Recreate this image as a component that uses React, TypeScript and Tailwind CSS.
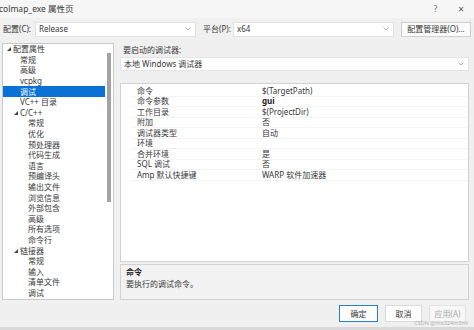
const font = { fontFamily: '"Noto Sans", "Noto Sans CJK SC", sans-serif' };

type Node = { label: string; level: 0 | 1 | 2; open?: boolean; selected?: boolean };

const tree: Node[] = [
  { label: "配置属性", level: 0, open: true },
  { label: "常规", level: 1 },
  { label: "高级", level: 1 },
  { label: "vcpkg", level: 1 },
  { label: "调试", level: 1, selected: true },
  { label: "VC++ 目录", level: 1 },
  { label: "C/C++", level: 1, open: true },
  { label: "常规", level: 2 },
  { label: "优化", level: 2 },
  { label: "预处理器", level: 2 },
  { label: "代码生成", level: 2 },
  { label: "语言", level: 2 },
  { label: "预编译头", level: 2 },
  { label: "输出文件", level: 2 },
  { label: "浏览信息", level: 2 },
  { label: "外部包含", level: 2 },
  { label: "高级", level: 2 },
  { label: "所有选项", level: 2 },
  { label: "命令行", level: 2 },
  { label: "链接器", level: 1, open: true },
  { label: "常规", level: 2 },
  { label: "输入", level: 2 },
  { label: "清单文件", level: 2 },
  { label: "调试", level: 2 },
];

const props: [string, string, boolean?][] = [
  ["命令", "$(TargetPath)"],
  ["命令参数", "gui", true],
  ["工作目录", "$(ProjectDir)"],
  ["附加", "否"],
  ["调试器类型", "自动"],
  ["环境", ""],
  ["合并环境", "是"],
  ["SQL 调试", "否"],
  ["Amp 默认快捷键", "WARP 软件加速器"],
];

function Chevron() {
  return (
    <svg width="6" height="4" viewBox="0 0 6 4" className="shrink-0">
      <polyline points="0.5,0.5 3,3 5.5,0.5" fill="none" stroke="#9a9a9a" strokeWidth="0.8" />
    </svg>
  );
}

function Triangle() {
  return (
    <span className="flex w-[6px] shrink-0 items-center">
      <svg width="4" height="4" viewBox="0 0 4 4">
        <polygon points="4,0 4,4 0,4" fill="#444" />
      </svg>
    </span>
  );
}

function TreeRow({ node }: { node: Node }) {
  const pad =
    node.level === 0 ? "pl-[4px]" : node.level === 2 ? "pl-[25px]" : node.open ? "pl-[11px]" : "pl-[17px]";
  return (
    <div
      className={`flex h-[10.6px] items-center whitespace-nowrap ${pad} ${
        node.selected ? "bg-[#0a72d6] text-white" : "text-[#383838]"
      }`}
    >
      {node.open && <Triangle />}
      <span>{node.label}</span>
    </div>
  );
}

export default function App() {
  return (
    <div className="relative flex h-[330px] w-[474px] flex-col overflow-hidden bg-[#f0f0f0] text-[8px] text-[#383838]" style={font}>
      {/* title */}
      <div className="flex h-[18px] items-center bg-[#f6f6f6] pr-[10px]">
        <span className="ml-[-1px] text-[8.5px]">colmap_exe 属性页</span>
        <span className="ml-auto text-[8px] text-[#666]">?</span>
        <span className="ml-[21px] text-[10px] leading-none text-[#555]">×</span>
      </div>

      {/* config row */}
      <div className="flex h-[22px] items-center pl-[3px]">
        <span className="w-[32px]">配置(C):</span>
        <div className="flex h-[15px] w-[161px] items-center justify-between border border-[#e2e2e2] bg-white pl-[3px] pr-[4px]">
          <span>Release</span>
          <Chevron />
        </div>
        <span className="ml-[7px] w-[30px]">平台(P):</span>
        <div className="flex h-[15px] w-[161px] items-center justify-between border border-[#e2e2e2] bg-white pl-[3px] pr-[4px]">
          <span>x64</span>
          <Chevron />
        </div>
        <div className="ml-[7px] flex h-[15px] w-[70px] items-center justify-center border border-[#cfcfcf] bg-[#fbfbfb]">
          配置管理器(O)...
        </div>
      </div>

      {/* main */}
      <div className="mt-[3px] flex h-[257px] pl-[2px] pr-[5px]">
        <div className="flex w-[112px] border border-[#c9c9c9] bg-white">
          <div className="flex-1">
            {tree.map((n, i) => (
              <TreeRow key={i} node={n} />
            ))}
          </div>
          <div className="w-[8px] pl-[2px]">
            <div className="mt-[9px] h-[149px] w-[4px] bg-[#a3a3a3]" />
          </div>
        </div>

        <div className="ml-[6px] flex flex-1 flex-col">
          <div className="flex h-[14px] items-center pl-[3px]">要启动的调试器:</div>
          <div className="flex h-[14px] items-center justify-between border border-[#e4e4e4] bg-white pl-[3px] pr-[4px]">
            <span>本地 Windows 调试器</span>
            <Chevron />
          </div>

          <div className="mt-[12px] h-[179px] border border-[#d2d2d2] bg-white pt-[2px]">
            {props.map(([k, v, b], i) => (
              <div key={i} className="ml-[10px] flex h-[10.5px] items-center border-b border-[#f4f4f4]">
                <span className="w-[131px] pl-[6px]">{k}</span>
                <span className={b ? "font-bold text-[#222]" : ""}>{v}</span>
              </div>
            ))}
          </div>

          <div className="mt-[2px] h-[36px] border border-[#d2d2d2] bg-[#f2f2f2] pl-[5px] pt-[1px] leading-[12px]">
            <div className="font-bold text-[#222]">命令</div>
            <div>要执行的调试命令。</div>
          </div>
        </div>
      </div>

      {/* footer */}
      <div className="flex h-[27px] items-center justify-end gap-[7px] pr-[8px]">
        <div className="flex h-[17px] w-[39px] items-center justify-center border border-[#2b7fd0] bg-[#fdfdfd]">确定</div>
        <div className="flex h-[17px] w-[37px] items-center justify-center border border-[#dadada] bg-[#fdfdfd]">取消</div>
        <div className="flex h-[17px] w-[37px] items-center justify-center border border-[#e2e2e2] bg-[#f7f7f7] text-[#a8a8a8]">应用(A)</div>
      </div>
      <div className="h-[3px] bg-[#d9d9d9]" />

      <span className="absolute bottom-[3.5px] right-[6px] text-[5.5px] leading-none text-[#b0b0b0]">CSDN @mo324m3ml</span>
    </div>
  );
}
